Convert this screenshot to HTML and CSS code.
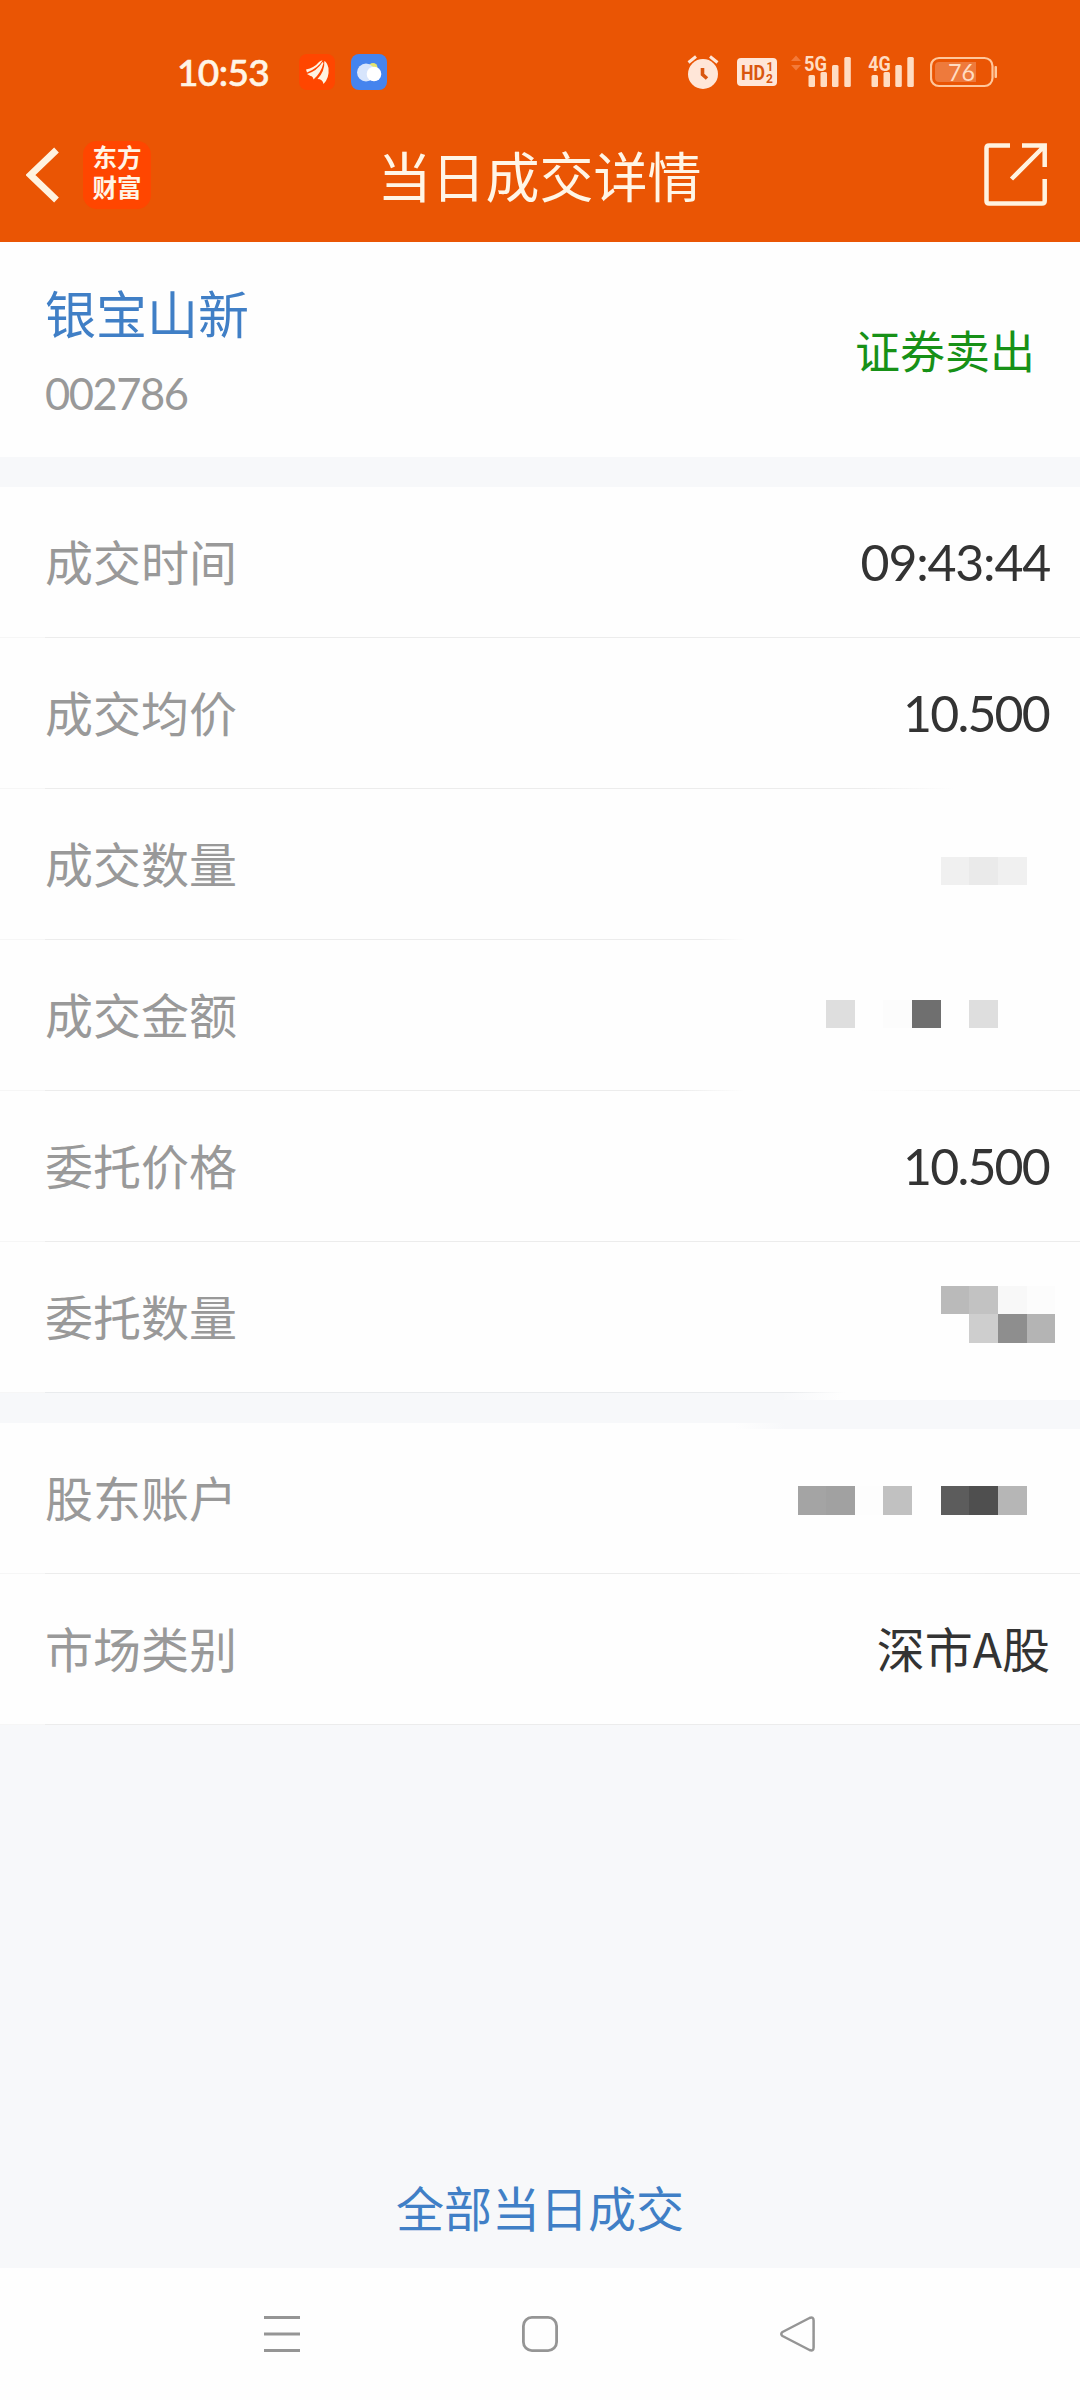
FILE: index.html
```html
<!DOCTYPE html>
<html lang="zh-CN">
<head>
<meta charset="utf-8">
<title>当日成交详情</title>
<link rel="stylesheet" href="styles.css">
</head>
<body>
<header class="top">
  <div class="status">
    <span class="clock">10:53</span>
    <svg class="tile-app" width="36" height="36" viewBox="0 0 36 36">
      <rect width="36" height="36" rx="8" fill="#ff4600"/>
      <g fill="#fff3e2">
        <path d="M7 15.500Q15 14 20 8Q22 6 23.500 6.500Q19 14 8 18.500Z"/>
        <path d="M8 20Q18 17 23.500 8L24.500 9Q22 19 14.500 25.500Q14 22 11.500 22Z"/>
        <path d="M25.300 7Q28 8 29.500 14Q30.500 24 24.500 30Q23.500 25 18.500 25Q26 17 25.300 7Z"/>
      </g>
    </svg>
    <svg class="tile-weather" width="36" height="36" viewBox="0 0 36 36">
      <rect width="36" height="36" rx="8" fill="#4584ee"/>
      <circle cx="22" cy="13.500" r="4.500" fill="#e4e472"/>
      <circle cx="15" cy="18.500" r="9" fill="#d7e5fc"/>
      <circle cx="23" cy="20" r="7.300" fill="#fff"/>
    </svg>
    <div class="signals">
      <svg width="32" height="36" viewBox="687 54 32 36">
        <circle cx="703" cy="74" r="15" fill="#ffe6d8"/>
        <path d="M688.500 62.500L696 56.500M717.500 62.500L710 56.500" stroke="#ffe6d8" stroke-width="3"/>
        <path d="M702.500 68V74.500L707 78.500" fill="none" stroke="#d9560f" stroke-width="3.600"/>
      </svg>
      <svg width="40" height="28" viewBox="0 0 40 28">
        <rect width="40" height="28" rx="4" fill="#ffe6d8"/>
        <g class="badge-text"><text x="4" y="21.500" font-size="21" textLength="24" lengthAdjust="spacingAndGlyphs">HD</text><text x="29.500" y="12.500" font-size="12">1</text><text x="29" y="24.500" font-size="12">2</text></g>
      </svg>
      <svg class="net-5g" width="60" height="48" viewBox="791 48 60 48">
        <path d="M791 61L796 55.500L801 61ZM791 65L796 70.500L801 65Z" fill="#f37a3a"/>
        <text class="net-text" x="804" y="70.500" font-size="21" textLength="23" lengthAdjust="spacingAndGlyphs">5G</text>
        <g fill="#ffdcc2"><rect x="808.500" y="75" width="6.500" height="12" rx="1.500"/><rect x="820.500" y="72" width="6.500" height="15" rx="1.500"/><rect x="832" y="65" width="6.500" height="22" rx="1.500"/><rect x="844.300" y="57" width="6.500" height="30" rx="1.500"/></g>
      </svg>
      <svg class="net-4g" width="46" height="48" viewBox="868 48 46 48">
        <text class="net-text" x="868.300" y="70.500" font-size="21" textLength="22.500" lengthAdjust="spacingAndGlyphs">4G</text>
        <g fill="#ffdcc2"><rect x="871.500" y="75" width="6.500" height="12" rx="1.500"/><rect x="883.500" y="72" width="6.500" height="15" rx="1.500"/><rect x="895.300" y="65" width="6.500" height="22" rx="1.500"/><rect x="907.300" y="57" width="6.500" height="30" rx="1.500"/></g>
      </svg>
      <svg width="67" height="36" viewBox="930 54 67 36">
        <rect x="931" y="58" width="61.500" height="28" rx="8" fill="none" stroke="#ffc79c" stroke-width="2.200"/>
        <rect x="994.500" y="66" width="2.500" height="12" rx="1" fill="#ffc79c"/>
        <path d="M939 62H976V82H939Q935 82 935 78V66Q935 62 939 62Z" fill="#ee7a3c"/>
        <text class="battery-text" x="948" y="81.200" font-size="24" textLength="27" lengthAdjust="spacingAndGlyphs">76</text>
      </svg>
    </div>
  </div>
  <div class="titlebar">
    <div class="left">
      <svg width="33" height="58" viewBox="26 145 33 58"><path d="M56.500 149L30.500 174L56.500 199" fill="none" stroke="#fff3e0" stroke-width="6.800"/></svg>
      <div class="brand">东方<br>财富</div>
    </div>
    <h1>当日成交详情</h1>
    <svg class="share" width="64" height="64" viewBox="984 143 64 64" fill="none" stroke="#fff3e0" stroke-width="4.500">
      <path d="M1010 145.500H989Q986.500 145.500 986.500 148V201Q986.500 203.500 989 203.500H1042Q1044.700 203.500 1044.700 201V179"/>
      <path d="M1022 145.500H1044.700V167M1011.500 179L1043.500 147"/>
    </svg>
  </div>
</header>

<section class="card stock">
  <div class="names"><div class="name">银宝山新</div><div class="code">002786</div></div>
  <div class="side">证券卖出</div>
</section>

<section class="card details">
  <div class="row"><span class="label">成交时间</span><span class="value num">09:43:44</span></div>
  <div class="row fade-late"><span class="label">成交均价</span><span class="value num price">10.500</span></div>
  <div class="row fade-early"><span class="label">成交数量</span>
    <svg class="mosaic" width="257" height="150" viewBox="798 789 257 150"><path fill="#f0f0f0" d="M941 857h86v28h-86z"/><path fill="#eaeaea" d="M969 857h29v28h-29z"/></svg></div>
  <div class="row fade-middle"><span class="label">成交金额</span>
    <svg class="mosaic" width="257" height="150" viewBox="798 940 257 150"><path fill="#dedede" d="M826 1000h29v28h-29zM969 1000h29v28h-29z"/><path fill="#fcfcfc" d="M883 1000h29v28h-29z"/><path fill="#6f6f6f" d="M912 1000h29v28h-29z"/></svg></div>
  <div class="row"><span class="label">委托价格</span><span class="value num price">10.500</span></div>
  <div class="row fade-end"><span class="label">委托数量</span>
    <svg class="mosaic" width="257" height="150" viewBox="798 1242 257 150"><path fill="#bababa" d="M941 1286h28v28h-28z"/><path fill="#c2c2c2" d="M969 1286h29v28h-29z"/><path fill="#f8f8f8" d="M998 1286h29v28h-29z"/><path fill="#fcfcfc" d="M1027 1286h28v28h-28z"/><path fill="#cecece" d="M969 1314h29v29h-29z"/><path fill="#8e8e8e" d="M998 1314h29v29h-29z"/><path fill="#b4b4b4" d="M1027 1314h28v29h-28z"/></svg></div>
</section>

<div class="gap"></div>

<section class="card account">
  <div class="row fade-soft"><span class="label">股东账户</span>
    <svg class="mosaic" width="257" height="150" viewBox="798 1423 257 150"><path fill="#a4a4a4" d="M798 1486h28v29h-28z"/><path fill="#a1a1a1" d="M826 1486h29v29h-29z"/><path fill="#fdfdfd" d="M855 1486h28v29h-28z"/><path fill="#c1c1c1" d="M883 1486h29v29h-29z"/><path fill="#5c5c5c" d="M941 1486h28v29h-28z"/><path fill="#4f4f4f" d="M969 1486h29v29h-29z"/><path fill="#b6b6b6" d="M998 1486h29v29h-29z"/></svg></div>
  <div class="row"><span class="label">市场类别</span><span class="value">深市A股</span></div>
</section>

<main class="rest"><a class="all">全部当日成交</a></main>

<nav class="nav">
  <svg width="36" height="36" viewBox="0 0 36 36" stroke="#959595" stroke-width="3"><path d="M0 1.500H36M0 18H36M0 34.500H36"/></svg>
  <svg width="36" height="36" viewBox="0 0 36 36" fill="none" stroke="#959595" stroke-width="2.800"><rect x="1.400" y="1.400" width="33.200" height="33.200" rx="8.500"/></svg>
  <svg width="36" height="36" viewBox="0 0 36 36" fill="none" stroke="#959595" stroke-width="2.500" stroke-linejoin="round"><path d="M2.500 16L29.500 2Q33.600 0.500 33.600 4.500V31.500Q33.600 35.500 29.500 34L2.500 20Q0 18 2.500 16Z"/></svg>
</nav>
</body>
</html>
```
FILE: styles.css
```css
* { box-sizing: border-box; }
body {
  margin: 0;
  width: 1080px;
  height: 2400px;
  display: flex;
  flex-direction: column;
  background: #f7f8fa;
  color: #333;
  font-family: "Noto Sans CJK SC", sans-serif;
}
svg { display: block; flex: none; }

.top { height: 242px; background: #ea5504; color: #fff5e6; }
.status {
  height: 108px;
  padding: 36px 83px 0 177px;
  display: flex;
  align-items: center;
}
.clock {
  width: 122px;
  font: 500 37px/36px Lato, sans-serif;
  letter-spacing: -0.6px;
  -webkit-text-stroke: 0.6px #fff5e6;
}
.tile-weather { margin-left: 16px; }
.signals { margin-left: auto; display: flex; align-items: center; }
.signals svg + svg { margin-left: 18px; }
.signals svg + .net-5g { margin-left: 14px; }
.signals svg + .net-4g { margin-left: 17px; }
.signals .net-4g + svg { margin-left: 16px; }
.badge-text { font-family: Roboto, sans-serif; font-weight: 700; fill: #d9560f; }
.net-text { font-family: Roboto, sans-serif; font-weight: 700; fill: #ffdcc2; }
.battery-text { font-family: Lato, sans-serif; fill: #ffdcc2; }

.titlebar {
  height: 134px;
  padding: 0 32px 0 26px;
  display: grid;
  grid-template-columns: 1fr auto 1fr;
  align-items: center;
}
.left { display: flex; align-items: center; gap: 24px; }
.brand {
  width: 68px;
  height: 68px;
  padding-top: 3px;
  border-radius: 14px;
  background: #ff4600;
  text-align: center;
  font-family: "Liberation Sans", "Noto Sans CJK SC", sans-serif;
  font-size: 24.5px;
  font-weight: 700;
  line-height: 30px;
}
.titlebar h1 { margin: 0; font-size: 54px; font-weight: 400; line-height: 80px; padding: 0 0 0 5px; }
.share { justify-self: end; }

.card { background: #fefefe; }
.stock {
  height: 215px;
  padding: 0 45px;
  display: flex;
  justify-content: space-between;
  align-items: center;
}
.name { font-size: 51px; line-height: 76px; margin-top: -2px; color: #407fc6; }
.code { font: 43.5px/60px Lato, sans-serif; letter-spacing: -1.5px; color: #999; margin-top: 13px; }
.side { font-size: 45px; line-height: 66px; color: #179117; }

.details { margin-top: 30px; }
.row {
  --line: #ececec 0 100%;
  height: 151px;
  padding: 0 30px 1px 45px;
  display: flex;
  justify-content: space-between;
  align-items: center;
  background: linear-gradient(to right, #f6f6f6 45px, transparent 45px) 0 100% / 45px 1px no-repeat,
    linear-gradient(to right, var(--line)) 0 100% / 100% 1px no-repeat;
}
.fade-late { --line: #ececec 860px, #fefefe 955px; }
.fade-early { --line: #ececec 700px, #fefefe 745px; }
.fade-middle { --line: #ececec 680px, #fefefe 745px, #fefefe 860px, #ececec 1060px; }
.fade-end { --line: #e9ebed 790px, #fefefe 845px; }
.fade-soft { --line: #ececec 730px, #f7f7f7 790px, #f7f7f7 890px, #ececec 990px; }
.label, .value { font-size: 48px; line-height: 70px; margin-top: -4px; }
.label { color: #999; }
.num { font: 50px/70px Lato, sans-serif; letter-spacing: -1.2px; margin: 0; }
.price { letter-spacing: -1.8px; margin-right: 1px; }
.mosaic { margin-right: -5px; shape-rendering: crispEdges; }

.gap { height: 30px; background: linear-gradient(to right, transparent 780px, #fefefe 840px) 0 0 / 100% 7px no-repeat; }
.account { background: linear-gradient(to right, transparent 735px, #f7f8fa 785px) 0 0 / 100% 6px no-repeat, #fefefe; }

.rest { flex: 1; display: flex; flex-direction: column; justify-content: flex-end; align-items: center; }
.all { font-size: 48px; line-height: 70px; color: #407fc6; margin-bottom: 27px; }
.nav { height: 132px; background: #fefefe; display: flex; justify-content: center; align-items: center; gap: 222px; }
```
